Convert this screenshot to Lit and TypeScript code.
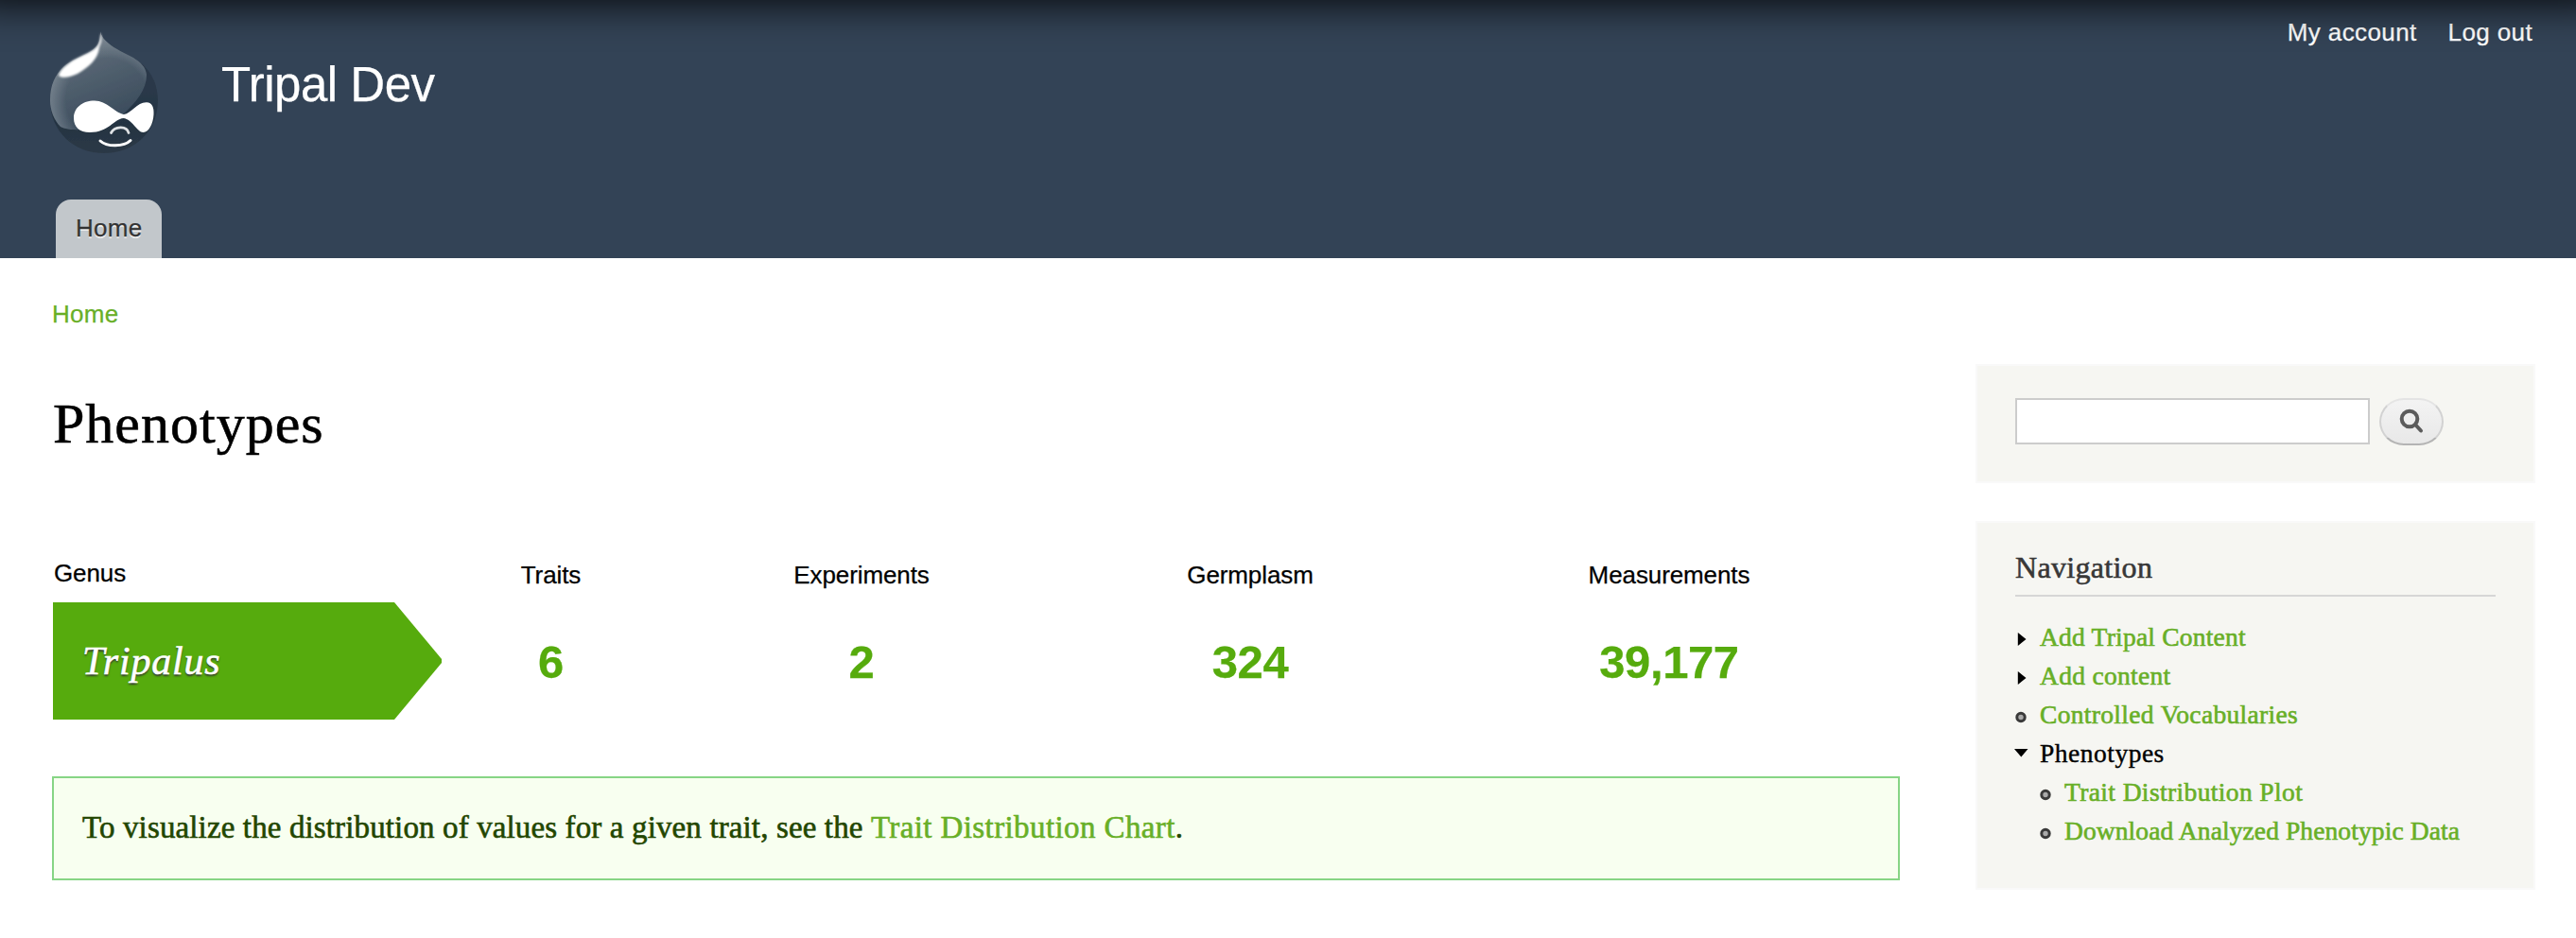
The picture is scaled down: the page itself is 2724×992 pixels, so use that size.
import { LitElement, html, css, svg } from "lit";
import { customElement } from "lit/decorators.js";
import { styleMap } from "lit/directives/style-map.js";

type Bullet = "collapsed" | "leaf" | "expanded";
interface MenuItem { label: string; bullet: Bullet; tracking: number; sub?: boolean; active?: boolean; }

const MENU: MenuItem[] = [
  { label: "Add Tripal Content", bullet: "collapsed", tracking: 0.22 },
  { label: "Add content", bullet: "collapsed", tracking: 0.3 },
  { label: "Controlled Vocabularies", bullet: "leaf", tracking: 0.33 },
  { label: "Phenotypes", bullet: "expanded", tracking: 0.5, active: true },
  { label: "Trait Distribution Plot", bullet: "leaf", tracking: 0.38, sub: true },
  { label: "Download Analyzed Phenotypic Data", bullet: "leaf", tracking: 0.1, sub: true },
];

const STATS = [
  { label: "Traits", value: "6" },
  { label: "Experiments", value: "2" },
  { label: "Germplasm", value: "324" },
  { label: "Measurements", value: "39,177" },
];

@customElement("site-logo")
export class SiteLogo extends LitElement {
  static styles = css`:host { display: block; width: 114px; height: 130px; } svg { display: block; overflow: visible; }`;
  render() {
    return html`<svg width="114" height="130" viewBox="0 0 114 130">
      <defs>
        <linearGradient id="base" x1="0" y1="0" x2="0" y2="1">
          <stop offset="0" stop-color="#2c3b4c"></stop><stop offset=".5" stop-color="#293848"></stop><stop offset=".75" stop-color="#243342"></stop><stop offset="1" stop-color="#2c3946"></stop>
        </linearGradient>
        <linearGradient id="sheen" x1=".15" y1="0" x2=".55" y2="1">
          <stop offset="0" stop-color="#66737f"></stop><stop offset=".45" stop-color="#52616f"></stop><stop offset="1" stop-color="#394a5b"></stop>
        </linearGradient>
        <radialGradient id="rim" gradientUnits="userSpaceOnUse" cx="60" cy="72" r="62">
          <stop offset=".7" stop-color="#8d98a2" stop-opacity="0"></stop><stop offset="1" stop-color="#8d98a2" stop-opacity=".6"></stop>
        </radialGradient>
        <filter id="soft" x="-20%" y="-20%" width="140%" height="140%"><feGaussianBlur stdDeviation="0.9"></feGaussianBlur></filter>
        <filter id="fine" x="-20%" y="-20%" width="140%" height="140%"><feGaussianBlur stdDeviation="0.5"></feGaussianBlur></filter>
      </defs>
      <path filter="url(#fine)" fill="url(#base)" d="M53 .5C54 5 57 9 62 13C69 19 79 23 88 28C104 37 114 53 114 73C114 106 89 129 57 129C25 129 0 106 0 73C0 57 5 46 15 37C26 28 45 24 51 13C53 9 53 4 53 .5Z"></path>
      <g filter="url(#fine)">
        <path fill="url(#sheen)" d="M53 .5C54 5 57 9 62 13C69 19 79 23 88 28C96 33 101 38 102 46C102 62 91 75 78 87L40 104C28 105 16 104 11 101C4 94 0 83 0 73C0 57 5 46 15 37C26 28 45 24 51 13C53 9 53 4 53 .5Z"></path>
        <path fill="url(#rim)" d="M53 .5C54 5 57 9 62 13C69 19 79 23 88 28C96 33 101 38 102 46C102 62 91 75 78 87L40 104C28 105 16 104 11 101C4 94 0 83 0 73C0 57 5 46 15 37C26 28 45 24 51 13C53 9 53 4 53 .5Z"></path>
      </g>
      <path filter="url(#soft)" fill="#fff" d="M53 2C55 7 55 10 52 17C51 29 41 38 29 45C21 49 12 50 9 47C11 40 17 36 24 31C34 25 47 22 51 14C53 10 53 6 53 2Z"></path>
      <g filter="url(#fine)">
        <path fill="#fff" d="M25 92C25 81 34 73.5 47 73.5C60 73.5 68 86 78 88C86 87 92 75 102 75.300C108 75.500 110 81 109.500 88C109 98 104 107 98.500 107C92 107 87 93 77.500 92C67 93 62 107 42 107C31 107 25 101 25 92Z"></path>
        <path fill="none" stroke="#dfe2e5" stroke-width="2.800" stroke-linecap="round" d="M64.500 107.500C68 100.500 81 99.500 83 107.500"></path>
        <path fill="none" stroke="#fff" stroke-width="3" stroke-linecap="round" d="M53 116C60 122.500 78 122.500 85 115.500"></path>
      </g>
    </svg>`;
  }
}

@customElement("app-root")
export class AppRoot extends LitElement {
  static styles = css`
    :host { display: block; position: relative; height: 992px; overflow: hidden; background: #fff; color: #000;
      font-family: "Liberation Sans", Arial, sans-serif; font-size: 26px; -webkit-text-stroke: 0.25px currentColor; }
    .serif { font-family: "Liberation Serif", Georgia, serif; -webkit-text-stroke: 0.6px currentColor; }
    a { color: #68af27; text-decoration: none; -webkit-text-stroke-color: currentColor; }
    .shade { position: absolute; left: -30px; right: -30px; top: -60px; height: 60px; box-shadow: 0 6px 40px rgba(0, 0, 0, 0.82); }
    header { display: flex; flex-direction: column; height: 273px; background: #334356; }
    .brand { display: flex; align-items: flex-start; padding-left: 53px; }
    .brand site-logo { margin-top: 33px; }
    .site-name { margin: 60px 0 0 67px; font-size: 51px; line-height: 60px; letter-spacing: -0.5px; color: #fff; }
    .user-links { display: flex; gap: 33px; margin: 19px 46px 0 auto; line-height: 30px; letter-spacing: 0.38px; }
    .user-links a { color: #fff; }
    .tab { align-self: flex-start; box-sizing: border-box; width: 112px; height: 62px; margin: auto 0 0 59px; padding-left: 21px;
      border-radius: 16px 16px 0 0; background: #c2c7cb; color: #333; line-height: 61px; letter-spacing: 0.3px; text-shadow: 0 2px 0 #eee; }
    .breadcrumb { margin: 39px 0 0 55px; line-height: 40px; letter-spacing: 0.3px; }
    .columns { display: flex; align-items: flex-start; justify-content: space-between; padding: 33px 43px 0 55px; }
    main { width: 1954px; }
    h1 { margin: 28px 0 0 1px; font-size: 60px; line-height: 70px; letter-spacing: 1px; font-weight: 400; }
    .stats { display: grid; grid-template-columns: 411px 231px 426px 396px 490px; grid-template-rows: 46px 124px; margin: 108px -1px 0 1px; text-align: center; }
    .label { padding-top: 2px; line-height: 30px; letter-spacing: -0.1px; }
    .label.genus { padding: 0 0 0 1px; text-align: left; }
    .value { font-size: 49px; font-weight: 700; line-height: 126px; letter-spacing: -0.4px; color: #56ab0d; -webkit-text-stroke-color: #56ab0d; }
    .arrow { padding-left: 31px; background: #56ab0d; clip-path: polygon(0 0, 361px 0, 411px 60px, 411px 64px, 361px 100%, 0 100%);
      color: #fff; font-size: 42px; font-style: italic; line-height: 124px; letter-spacing: 0.8px; text-align: left; text-shadow: 0 2px 2px #333; }
    .notice { box-sizing: border-box; height: 110px; margin-top: 60px; padding-left: 30px; border: 2px solid #87d585; background: #f8fff0;
      color: #234600; font-size: 33px; line-height: 105px; letter-spacing: 0.13px; white-space: nowrap; }
    .notice a { letter-spacing: 0.4px; }
    aside { display: flex; flex-direction: column; gap: 40px; width: 592px; }
    .block { box-sizing: border-box; border: 2px solid #f9f9f9; background: #f6f6f2; padding: 0 40px; }
    .search { display: flex; align-items: flex-start; gap: 10px; height: 126px; padding-top: 34px; }
    .search input { box-sizing: border-box; width: 375px; height: 49px; border: 2px solid #ccc; border-radius: 0; background: #fff; padding: 0; margin: 0; }
    .search button { display: grid; place-items: center; box-sizing: border-box; width: 68px; height: 50px; padding: 0; border: 2px solid;
      border-color: #e4e4e4 #d2d2d2 #b4b4b4; border-radius: 26px / 25px; background: linear-gradient(#f3f3f3, #e8e8e8); }
    .nav { height: 390px; padding-top: 27px; }
    h2 { margin: 0; padding-bottom: 9px; border-bottom: 2px solid #d6d6d6; color: #383838; font-size: 32px; line-height: 41px; height: 40px;
      letter-spacing: 0.3px; font-weight: 400; text-shadow: 0 2px 0 #fff; }
    ul { margin: 22px 0 0; padding: 0; list-style: none; font-size: 27.5px; line-height: 41px; white-space: nowrap; }
    li { display: flex; height: 41px; }
    li.sub { padding-left: 26px; }
    li svg { flex: none; width: 26px; height: 41px; overflow: visible; }
    a.active { color: #000; -webkit-text-stroke-width: 0.4px; }
  `;

  private bullet(kind: Bullet) {
    const shape =
      kind === "collapsed" ? svg`<path d="M2.800 16L11.500 23L2.800 30Z" fill="#000"></path>` :
      kind === "expanded" ? svg`<path d="M-1 16H13.500L6.300 24.500Z" fill="#000"></path>` :
      svg`<circle cx="6" cy="23.500" r="4.200" fill="#aaa" stroke="#3a3a3a" stroke-width="3"></circle>`;
    return html`<svg viewBox="0 0 26 41">${shape}</svg>`;
  }

  render() {
    return html`
      <header>
        <div class="brand">
          <site-logo></site-logo>
          <div class="site-name">Tripal Dev</div>
          <nav class="user-links"><a>My account</a><a>Log out</a></nav>
        </div>
        <div class="tab">Home</div>
      </header>
      <div class="breadcrumb"><a>Home</a></div>
      <div class="columns">
        <main>
          <h1 class="serif">Phenotypes</h1>
          <section class="stats">
            <div class="label genus">Genus</div>
            ${STATS.map((s) => html`<div class="label">${s.label}</div>`)}
            <div class="arrow serif">Tripalus</div>
            ${STATS.map((s) => html`<div class="value">${s.value}</div>`)}
          </section>
          <div class="notice serif">To visualize the distribution of values for a given trait, see the <a>Trait Distribution Chart</a>.</div>
        </main>
        <aside>
          <form class="block search">
            <input type="text" />
            <button type="button">
              <svg width="28" height="28" viewBox="-1 0 28 28" fill="none" stroke="#5c5c5c" stroke-linecap="round">
                <circle cx="11" cy="11" r="8.300" stroke-width="4"></circle><path d="M17.500 17.500L23 23.500" stroke-width="4"></path>
              </svg>
            </button>
          </form>
          <section class="block nav serif">
            <h2>Navigation</h2>
            <ul>
              ${MENU.map((m) => html`<li class=${m.sub ? "sub" : ""}>${this.bullet(m.bullet)}<a class=${m.active ? "active" : ""} style=${styleMap({ letterSpacing: `${m.tracking}px` })}>${m.label}</a></li>`)}
            </ul>
          </section>
        </aside>
      </div>
      <div class="shade"></div>
    `;
  }
}
